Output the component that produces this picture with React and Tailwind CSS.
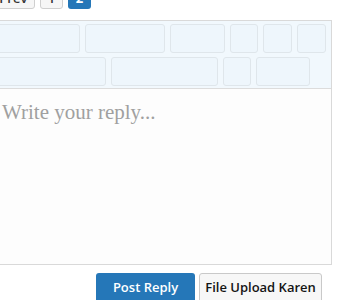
import React from 'react';

const ROW_ONE = [96, 80, 55, 28, 29, 29];
const ROW_TWO = [122, 107, 28, 54];

function ToolbarRow({ widths }) {
  return (
    <div className="flex gap-[5px]">
      {widths.map((w, i) => (
        <div
          key={i}
          className="h-[29px] shrink-0 rounded-[3px] border border-[#dfe6eb] bg-[#eef6fc]"
          style={{ width: w }}
        />
      ))}
    </div>
  );
}

export default function App() {
  return (
    <div className="h-[300px] w-[340px] overflow-hidden bg-white font-['Open_Sans',sans-serif]">
      <div className="-ml-[21px] -mt-[14px] w-[353px]">
        {/* pagination */}
        <div className="flex items-end gap-[5px] pl-[5px]">
          <div className="flex h-[22px] w-[51px] items-end justify-center rounded-[3px] border border-[#cfcfcf] bg-[#f6f6f6] pb-[1px] text-[13px] font-semibold leading-[18px] text-[#333]">
            ‹ Prev
          </div>
          <div className="flex h-[23px] w-[23px] items-end justify-center rounded-[3px] border border-[#cfcfcf] bg-[#f6f6f6] pb-[1px] text-[13px] font-semibold leading-[18px] text-[#333]">
            1
          </div>
          <div className="flex h-[23px] w-[23px] items-end justify-center rounded-[3px] bg-[#2577b8] pb-[2px] text-[13px] font-bold leading-[18px] text-white">
            2
          </div>
        </div>

        {/* editor */}
        <div className="mt-[11px] border border-[#d9d9d9]">
          <div className="flex flex-col gap-[4px] border-b border-[#dcdcdc] bg-[#f1f8fd] pb-[2px] pl-[4px] pt-[3px]">
            <ToolbarRow widths={ROW_ONE} />
            <ToolbarRow widths={ROW_TWO} />
          </div>
          <div className="h-[175px] bg-[#fdfdfd] pl-[22px] pt-[8px] font-['Liberation_Serif',serif] text-[21px] text-[#a0a0a0]">
            Write your reply...
          </div>
        </div>

        {/* actions */}
        <div className="mt-[8px] flex justify-end gap-[4px] pr-[10px]">
          <button className="h-[30px] w-[99px] rounded-[3px] bg-[#2577b8] text-[13px] font-semibold text-white">
            Post Reply
          </button>
          <button className="h-[30px] w-[123px] rounded-[3px] border border-[#c9c9c9] bg-[#f7f7f7] text-[13px] font-semibold text-[#141414]">
            File Upload Karen
          </button>
        </div>
      </div>
    </div>
  );
}
